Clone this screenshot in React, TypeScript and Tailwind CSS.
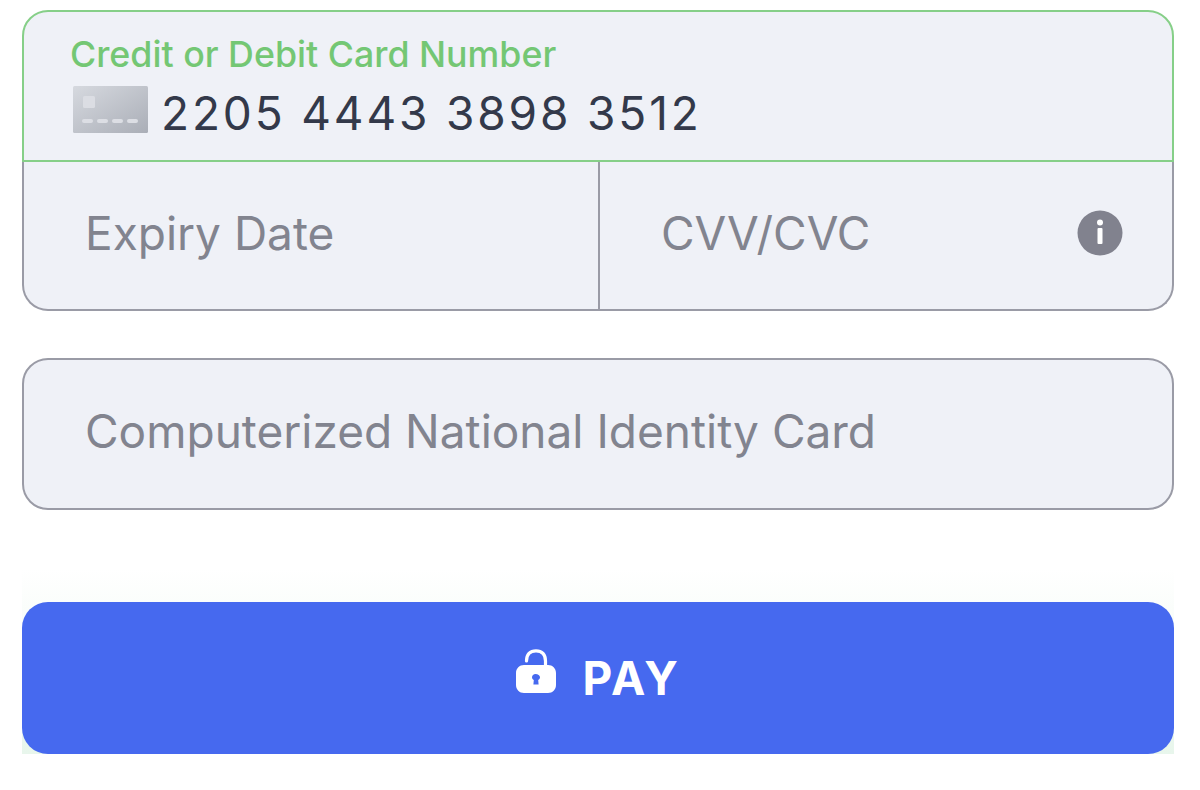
const InfoIcon = () => (
  <svg width="46" height="46" viewBox="0 0 46 46">
    <circle cx="23" cy="23" r="22.5" fill="#81828e" />
    <circle cx="23" cy="12.500" r="3" fill="#fff" />
    <rect x="20.500" y="18" width="5" height="16" rx="1" fill="#fff" />
  </svg>
)

const CardIcon = () => (
  <svg width="75" height="47" viewBox="0 0 75 47">
    <defs>
      <linearGradient id="card" x1="0" y1="0" x2="1" y2="1">
        <stop offset="0" stopColor="#d6d9df" />
        <stop offset="1" stopColor="#aaaeb7" />
      </linearGradient>
    </defs>
    <rect width="75" height="47" rx="1.500" fill="url(#card)" />
    <rect x="10" y="10" width="12" height="12" rx="1.500" fill="#dbdde3" />
    <rect x="9" y="33" width="11" height="4" rx="2" fill="#dcdee4" />
    <rect x="24" y="33" width="11" height="4" rx="2" fill="#dcdee4" />
    <rect x="39" y="33" width="11" height="4" rx="2" fill="#dcdee4" />
    <rect x="54" y="33" width="11" height="4" rx="2" fill="#dcdee4" />
  </svg>
)

const LockIcon = () => (
  <svg width="40" height="45" viewBox="0 0 40 45">
    <path d="M10.500 12C10.500 5.500 14 1.800 20 1.800C26 1.800 29.500 5.500 29.500 12V18" fill="none" stroke="#fff" strokeWidth="3.200" strokeLinecap="round" />
    <path
      fillRule="evenodd"
      fill="#fff"
      d="M8 16H32C36.500 16 40 19.500 40 24V36C40 40.500 36.500 44 32 44H8C3.500 44 0 40.500 0 36V24C0 19.500 3.500 16 8 16ZM19.500 25C17.500 25 16 26.500 16 28.300C16 29.500 16.700 30.600 17.800 31.100L17.400 35.500H22.600L22.200 31.100C23.300 30.600 24 29.500 24 28.300C24 26.500 22 25 19.500 25Z"
    />
  </svg>
)

export default function App() {
  return (
    <div className="w-[1200px] h-[790px] bg-white pt-[10px] pl-[22px] font-['Inter',sans-serif] overflow-hidden">
      <div className="w-[1152px]">
        <div className="h-[152px] bg-[#eff1f7] border-2 border-[#86cf88] rounded-t-[26px] pl-[46px] pt-[22px]">
          <div className="text-[35.750px] leading-[40px] font-medium text-[#74c774]">
            Credit or Debit Card Number
          </div>
          <div className="flex items-start gap-[14px] mt-[12px] ml-[3px]">
            <CardIcon />
            <span className="text-[46px] leading-[50px] tracking-[2.850px] mt-[2px] -ml-[1px] text-[#33394a]">
              2205 4443 3898 3512
            </span>
          </div>
        </div>
        <div className="flex h-[149px] bg-[#eff1f7] border-2 border-t-0 border-[#9a9ba6] rounded-b-[26px]">
          <div className="w-[576px] border-r-2 border-[#9a9ba6] flex items-center pl-[61px] pb-[5px] text-[46px] text-[#82848f]">
            Expiry Date
          </div>
          <div className="flex-1 flex items-center justify-between pl-[61px] pr-[49px] pb-[5px] text-[46px] text-[#82848f]">
            <span>CVV/CVC</span>
            <InfoIcon />
          </div>
        </div>
        <div className="mt-[47px] h-[152px] bg-[#eff1f7] border-2 border-[#9a9ba6] rounded-[26px] flex items-center pl-[61px] pb-[5px] text-[46px] text-[#82848f]">
          Computerized National Identity Card
        </div>
        <div className="mt-[59px] pt-[33px] bg-gradient-to-b from-white to-[#e8f6ec]">
          <div className="h-[152px] bg-[#4669ef] rounded-[26px] flex items-center justify-center gap-[27px] text-white">
            <span className="mb-[13px]">
              <LockIcon />
            </span>
            <span className="text-[46px] font-bold tracking-[2.500px]">PAY</span>
          </div>
        </div>
      </div>
    </div>
  )
}
